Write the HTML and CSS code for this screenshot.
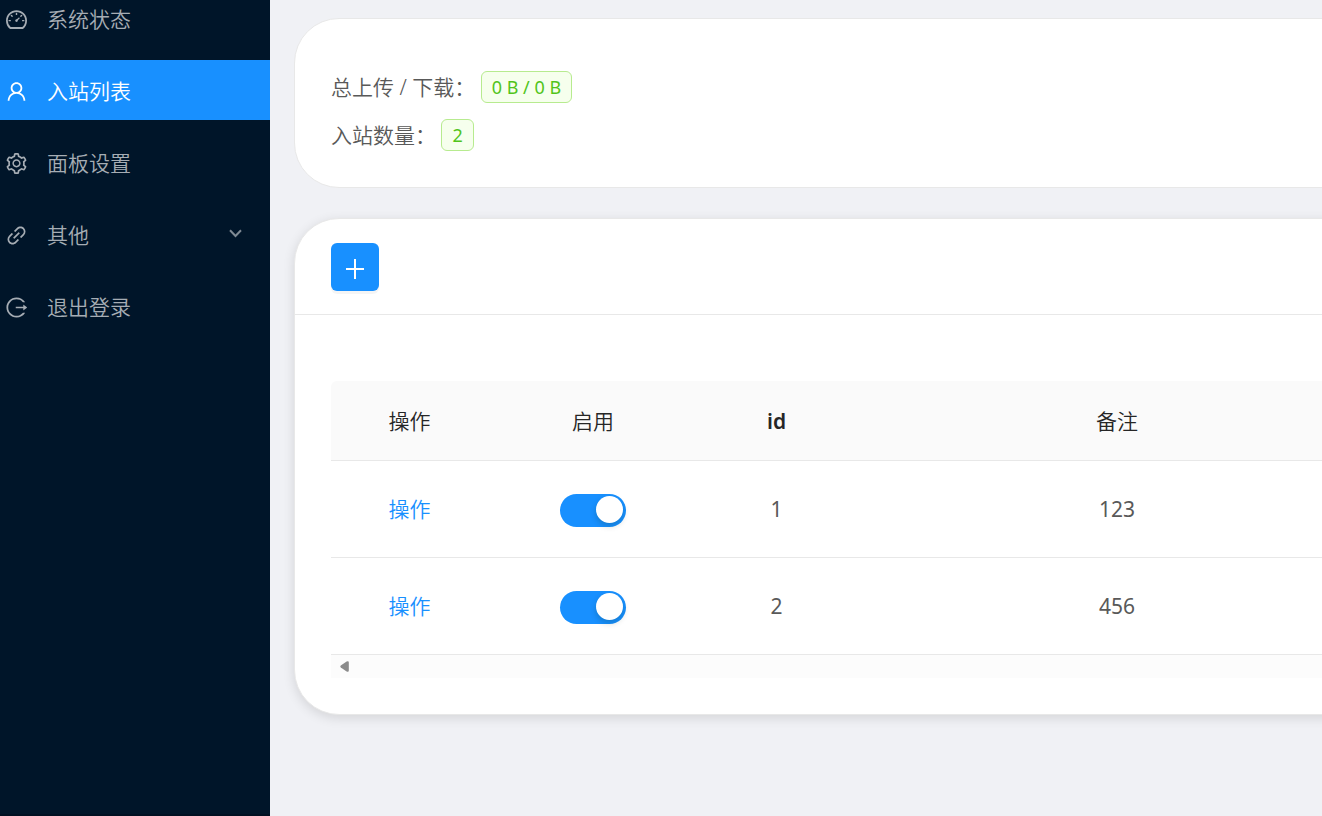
FILE: index.html
```html
<!DOCTYPE html>
<html lang="zh-CN">
<head>
<meta charset="utf-8">
<meta name="viewport" content="width=device-width, initial-scale=1">
<title>入站列表</title>
<link rel="stylesheet" href="styles.css">
</head>
<body>
<div class="layout">
  <nav class="sidebar" aria-label="主菜单">
    <ul class="menu">
      <li><a class="menu-item" href="#status">
        <svg class="icon" viewBox="64 64 896 896" aria-hidden="true"><path d="M924.8 385.6a446.7 446.7 0 0 0-96-142.4 446.7 446.7 0 0 0-142.4-96C631.1 123.8 572.5 112 512 112s-119.1 11.8-174.4 35.2a446.7 446.7 0 0 0-142.4 96 446.7 446.7 0 0 0-96 142.4C75.8 440.9 64 499.5 64 560c0 132.7 58.3 257.7 159.9 343.1l1.7 1.4c5.8 4.8 13.1 7.5 20.6 7.5h531.7c7.5 0 14.8-2.7 20.6-7.5l1.7-1.4C901.7 817.7 960 692.7 960 560c0-60.5-11.9-119.1-35.2-174.4zM761.4 836H262.6A371.12 371.12 0 0 1 140 560c0-99.4 38.7-192.8 109-263 70.3-70.3 163.7-109 263-109 99.4 0 192.8 38.7 263 109 70.3 70.3 109 163.7 109 263 0 105.6-44.5 205.5-122.6 276zM623.5 421.5a8.03 8.03 0 0 0-11.3 0L527.7 506c-18.7-5-39.4-.2-54.1 14.5a55.95 55.95 0 0 0 0 79.2 55.95 55.95 0 0 0 79.2 0 55.87 55.87 0 0 0 14.5-54.1l84.5-84.5c3.1-3.1 3.1-8.2 0-11.3l-28.3-28.3zM490 320h44c4.4 0 8-3.6 8-8v-80c0-4.4-3.6-8-8-8h-44c-4.4 0-8 3.6-8 8v80c0 4.4 3.6 8 8 8zm260 218v44c0 4.4 3.6 8 8 8h80c4.4 0 8-3.6 8-8v-44c0-4.4-3.6-8-8-8h-80c-4.4 0-8 3.6-8 8zm12.7-197.2l-31.1-31.1a8.03 8.03 0 0 0-11.3 0l-56.6 56.6a8.03 8.03 0 0 0 0 11.3l31.1 31.1c3.1 3.1 8.2 3.1 11.3 0l56.6-56.6c3.1-3.1 3.1-8.2 0-11.3zm-458.6-31.1a8.03 8.03 0 0 0-11.3 0l-31.1 31.1a8.03 8.03 0 0 0 0 11.3l56.6 56.6c3.1 3.1 8.2 3.1 11.3 0l31.1-31.1c3.1-3.1 3.1-8.2 0-11.3l-56.6-56.6zM262 530h-80c-4.4 0-8 3.6-8 8v44c0 4.4 3.6 8 8 8h80c4.4 0 8-3.6 8-8v-44c0-4.4-3.6-8-8-8z"/></svg>
        <span>系统状态</span></a></li>
      <li><a class="menu-item selected" href="#inbounds" aria-current="page">
        <svg class="icon" viewBox="64 64 896 896" aria-hidden="true"><path d="M858.5 763.6a374 374 0 0 0-80.6-119.5 375.63 375.63 0 0 0-119.5-80.6c-.4-.2-.8-.3-1.2-.5C719.5 518 760 444.7 760 362c0-137-111-248-248-248S264 225 264 362c0 82.7 40.5 156 102.8 201.1-.4.2-.8.3-1.2.5-44.8 18.9-85 46-119.5 80.6a375.63 375.63 0 0 0-80.6 119.5A371.7 371.7 0 0 0 136 901.8a8 8 0 0 0 8 8.2h60c4.4 0 7.9-3.5 8-7.8 2-77.2 33-149.5 87.8-204.3 56.7-56.7 132-87.9 212.2-87.9s155.5 31.2 212.2 87.9C779 752.7 810 825 812 902.2c.1 4.4 3.6 7.8 8 7.8h60a8 8 0 0 0 8-8.2c-1-47.8-10.9-94.3-29.5-138.2zM512 534c-45.9 0-89.1-17.9-121.6-50.4S340 407.9 340 362c0-45.9 17.9-89.1 50.4-121.6S466.1 190 512 190s89.1 17.9 121.6 50.4S684 316.1 684 362c0 45.9-17.9 89.1-50.4 121.6S557.9 534 512 534z"/></svg>
        <span>入站列表</span></a></li>
      <li><a class="menu-item" href="#settings">
        <svg class="icon" viewBox="64 64 896 896" aria-hidden="true"><path d="M924.8 625.7l-65.5-56c3.1-19 4.7-38.4 4.7-57.8s-1.6-38.8-4.7-57.8l65.5-56a32.03 32.03 0 0 0 9.3-35.2l-.9-2.6a443.74 443.74 0 0 0-79.7-137.9l-1.8-2.1a32.12 32.12 0 0 0-35.1-9.5l-81.3 28.9c-30-24.6-63.5-44-99.7-57.6l-15.7-85a32.05 32.05 0 0 0-25.8-25.7l-2.7-.5c-52.1-9.4-106.9-9.4-159 0l-2.7.5a32.05 32.05 0 0 0-25.8 25.7l-15.8 85.4a351.86 351.86 0 0 0-99 57.4l-81.9-29.1a32 32 0 0 0-35.1 9.5l-1.8 2.1a446.02 446.02 0 0 0-79.7 137.9l-.9 2.6c-4.5 12.5-.8 26.5 9.3 35.2l66.3 56.6c-3.1 18.8-4.6 38-4.6 57.1 0 19.2 1.5 38.4 4.6 57.1L99 625.5a32.03 32.03 0 0 0-9.3 35.2l.9 2.6c18.1 50.4 44.9 96.9 79.7 137.9l1.8 2.1a32.12 32.12 0 0 0 35.1 9.5l81.9-29.1c29.8 24.5 63.1 43.9 99 57.4l15.8 85.4a32.05 32.05 0 0 0 25.8 25.7l2.7.5a449.4 449.4 0 0 0 159 0l2.7-.5a32.05 32.05 0 0 0 25.8-25.7l15.7-85a350 350 0 0 0 99.7-57.6l81.3 28.9a32 32 0 0 0 35.1-9.5l1.8-2.1c34.8-41.1 61.6-87.5 79.7-137.9l.9-2.6c4.5-12.3.8-26.3-9.3-35zM788.3 465.9c2.5 15.1 3.8 30.6 3.8 46.1s-1.3 31-3.8 46.1l-6.6 40.1 74.7 63.9a370.03 370.03 0 0 1-42.6 73.6L721 702.8l-31.4 25.8c-23.9 19.6-50.5 35-79.3 45.8l-38.1 14.3-17.9 97a377.5 377.5 0 0 1-85 0l-17.9-97.2-37.8-14.5c-28.5-10.8-55-26.2-78.7-45.7l-31.4-25.9-93.4 33.2c-17-22.9-31.2-47.6-42.6-73.6l75.5-64.5-6.5-40c-2.4-14.9-3.7-30.3-3.7-45.5 0-15.3 1.2-30.6 3.7-45.5l6.5-40-75.5-64.5c11.3-26.1 25.6-50.7 42.6-73.6l93.4 33.2 31.4-25.9c23.7-19.5 50.2-34.9 78.7-45.7l37.9-14.3 17.9-97.2c28.1-3.2 56.8-3.2 85 0l17.9 97 38.1 14.3c28.7 10.8 55.4 26.2 79.3 45.8l31.4 25.8 92.8-32.9c17 22.9 31.2 47.6 42.6 73.6L781.8 426l6.5 39.9zM512 326c-97.2 0-176 78.8-176 176s78.8 176 176 176 176-78.8 176-176-78.8-176-176-176zm79.2 255.2A111.6 111.6 0 0 1 512 614c-29.9 0-58-11.7-79.2-32.8A111.6 111.6 0 0 1 400 502c0-29.9 11.7-58 32.8-79.2C454 401.6 482.1 390 512 390c29.9 0 58 11.6 79.2 32.8A111.6 111.6 0 0 1 624 502c0 29.9-11.7 58-32.8 79.2z"/></svg>
        <span>面板设置</span></a></li>
      <li><button class="menu-item" type="button" aria-expanded="false">
        <svg class="icon" viewBox="64 64 896 896" aria-hidden="true"><path d="M574 665.4a8.03 8.03 0 0 0-11.3 0L446.5 781.6c-53.8 53.8-144.6 59.5-204 0-59.5-59.5-53.8-150.2 0-204l116.2-116.2c3.1-3.1 3.1-8.2 0-11.3l-39.8-39.8a8.03 8.03 0 0 0-11.3 0L191.4 526.5c-84.6 84.6-84.6 221.5 0 306s221.5 84.6 306 0l116.2-116.2c3.1-3.1 3.1-8.2 0-11.3L574 665.4zm258.6-474c-84.6-84.6-221.5-84.6-306 0L410.3 307.6a8.03 8.03 0 0 0 0 11.3l39.7 39.7c3.1 3.1 8.2 3.1 11.3 0l116.2-116.2c53.8-53.8 144.6-59.5 204 0 59.5 59.5 53.8 150.2 0 204L665.3 562.6a8.03 8.03 0 0 0 0 11.3l39.8 39.8c3.1 3.1 8.2 3.1 11.3 0l116.2-116.2c84.5-84.6 84.5-221.5 0-306.1zM610.1 372.3a8.03 8.03 0 0 0-11.3 0L372.3 598.7a8.03 8.03 0 0 0 0 11.3l39.6 39.6c3.1 3.1 8.2 3.1 11.3 0l226.4-226.4c3.1-3.1 3.1-8.2 0-11.3l-39.5-39.6z"/></svg>
        <span>其他</span>
        <svg class="chevron" viewBox="0 0 13 9" aria-hidden="true"><path d="M1 1.2 6.5 7 12 1.2"/></svg></button></li>
      <li><a class="menu-item" href="#logout">
        <svg class="icon" viewBox="64 64 896 896" aria-hidden="true"><path d="M868 732h-70.3c-4.8 0-9.3 2.1-12.3 5.8-7 8.5-14.5 16.7-22.4 24.5a353.84 353.84 0 0 1-112.7 75.9A352.8 352.8 0 0 1 512.4 866c-47.9 0-94.3-9.4-137.9-27.8a353.84 353.84 0 0 1-112.7-75.9 353.28 353.28 0 0 1-76-112.5C167.3 606.2 158 559.9 158 512s9.4-94.2 27.8-137.8c17.8-42.1 43.4-80 76-112.5s70.5-58.1 112.7-75.9c43.6-18.4 90-27.8 137.9-27.8 47.9 0 94.3 9.3 137.9 27.8 42.2 17.8 80.1 43.4 112.7 75.9 7.9 7.9 15.3 16.1 22.4 24.5 3 3.7 7.6 5.8 12.3 5.8H868c6.3 0 10.2-7 6.7-12.3C798 160.5 663.8 81.6 511.3 82 271.7 82.6 79.6 277.1 82 516.4 84.4 751.9 276.2 942 512.4 942c152.1 0 285.7-78.8 362.3-197.7 3.4-5.3-.4-12.3-6.7-12.3zm88.9-226.3L815 393.7c-5.3-4.2-13-.4-13 6.3v76H488c-4.4 0-8 3.6-8 8v56c0 4.4 3.6 8 8 8h314v76c0 6.7 7.8 10.5 13 6.3l141.9-112a8 8 0 0 0 0-12.6z"/></svg>
        <span>退出登录</span></a></li>
    </ul>
  </nav>

  <main class="content">
    <section class="card summary">
      <p class="stat">总上传 / 下载： <span class="tag">0 B / 0 B</span></p>
      <p class="stat">入站数量： <span class="tag">2</span></p>
    </section>

    <section class="card raised">
      <header class="card-head">
        <button class="add" type="button" aria-label="添加入站">
          <svg viewBox="0 0 20 20" aria-hidden="true"><path d="M10 0v20M1 10h18"/></svg>
        </button>
      </header>
      <div class="card-body">
        <div class="table-wrap">
          <table class="table">
            <colgroup><col class="col-narrow"><col class="col-switch"><col class="col-narrow"><col class="col-remark"></colgroup>
            <thead>
              <tr><th scope="col">操作</th><th scope="col">启用</th><th scope="col" class="strong">id</th><th scope="col">备注</th></tr>
            </thead>
            <tbody>
              <tr>
                <td><a class="action" href="#inbound-1">操作</a></td>
                <td><input class="switch" type="checkbox" aria-label="启用 1" checked></td>
                <td class="value">1</td><td class="value">123</td>
              </tr>
              <tr>
                <td><a class="action" href="#inbound-2">操作</a></td>
                <td><input class="switch" type="checkbox" aria-label="启用 2" checked></td>
                <td class="value">2</td><td class="value">456</td>
              </tr>
            </tbody>
          </table>
          <div class="scroll-track">
            <svg class="scroll-arrow" viewBox="0 0 9 11" aria-hidden="true"><path d="M.8 4.6 6.6.5Q8.8-.4 8.8 1.4v8.2q0 1.8-2.2.9L.8 6.4Q-.2 5.5.8 4.6z"/></svg>
          </div>
        </div>
      </div>
    </section>
  </main>
</div>
</body>
</html>
```
FILE: styles.css
```css
* {
  box-sizing: border-box;
}

body {
  margin: 0;
  background: #f0f1f5;
  color: #595959;
  font-family: "Noto Sans", "Noto Sans CJK SC", sans-serif;
  font-size: 21px;
  font-weight: 350;
  line-height: 32px;
}

.layout {
  display: flex;
  min-height: 100vh;
  overflow: hidden;
}

/* Sidebar */
.sidebar {
  flex: 0 0 270px;
  background: #001529;
  border-bottom: 2px solid #001022;
}

.menu {
  display: grid;
  gap: 12px;
  margin: -12px 0 0;
  padding: 0;
  list-style: none;
}

.menu-item {
  display: flex;
  align-items: center;
  gap: 20px;
  width: 100%;
  height: 60px;
  padding: 3px 28px 0 6px;
  border: 0;
  background: none;
  color: #a6adb4;
  font: inherit;
  text-align: left;
  text-decoration: none;
}

.menu-item.selected {
  background: #1890ff;
  color: #fff;
}

.menu-item span {
  padding-bottom: 2px;
}

.icon {
  flex: none;
  width: 21px;
  height: 21px;
  fill: currentColor;
}

.chevron {
  width: 13px;
  height: 9px;
  margin-bottom: 4px;
  margin-left: auto;
  fill: none;
  stroke: #7f8a94;
  stroke-width: 2;
}

/* Cards run past the right edge of the window */
.content {
  flex: 1;
  min-width: 0;
  margin-right: -60px;
  padding: 18px 0 36px 24px;
}

.card {
  border: 1px solid #e8e8e8;
  border-radius: 45px;
  background: #fff;
}

.raised {
  margin-top: 30px;
  box-shadow: 0 3px 12px rgba(0, 0, 0, 0.12);
}

.summary {
  display: grid;
  gap: 16px;
  padding: 52px 36px 36px;
}

.stat {
  display: flex;
  align-items: center;
  margin: 0;
  white-space: pre;
}

.tag {
  padding: 0 10px;
  border: 1px solid #b7eb8f;
  border-radius: 6px;
  background: #f6ffed;
  color: #52c41a;
  font-size: 18px;
  font-weight: 400;
  line-height: 30px;
}

.card-head {
  display: flex;
  padding: 24px 36px 23px;
  border-bottom: 1px solid #e8e8e8;
}

.add {
  display: grid;
  place-items: center;
  width: 48px;
  height: 48px;
  padding: 3px 0 0;
  border: 0;
  border-radius: 6px;
  background: #1890ff;
  box-shadow: 0 3px 0 rgba(0, 0, 0, 0.04);
}

.add svg {
  width: 20px;
  height: 20px;
  stroke: #fff;
  stroke-width: 2;
}

.card-body {
  padding: 66px 0 36px 36px;
}

/* Table */
.table-wrap {
  overflow: hidden;
}

.table {
  width: 1048px;
  border-collapse: separate;
  border-spacing: 0;
  table-layout: fixed;
  text-align: center;
}

.col-narrow {
  width: 157px;
}

.col-switch {
  width: 210px;
}

.col-remark {
  width: 524px;
}

.table th,
.table td {
  padding: 0;
  border-bottom: 1px solid #e8e8e8;
}

.table th {
  height: 80px;
  background: #fafafa;
  color: #262626;
  font-weight: 350;
}

.table th:first-child {
  border-top-left-radius: 6px;
}

.table th.strong {
  font-weight: 600;
}

.table td {
  height: 97px;
}

.table .value {
  font-weight: 400;
}

.action {
  color: #1890ff;
  text-decoration: none;
}

.switch {
  display: flex;
  align-items: center;
  justify-content: flex-end;
  width: 66px;
  height: 33px;
  margin: 2px auto 0;
  padding: 0 3px 2px;
  border-radius: 17px;
  appearance: none;
  background: #1890ff;
}

.switch::before {
  width: 27px;
  height: 27px;
  border-radius: 50%;
  background: #fff;
  box-shadow: 0 3px 6px rgba(0, 35, 11, 0.2);
  content: "";
}

.switch:not(:checked) {
  justify-content: flex-start;
  background: #bfbfbf;
}

.scroll-track {
  display: flex;
  align-items: center;
  height: 23px;
  padding-left: 9px;
  background: #fcfcfc;
}

.scroll-arrow {
  width: 9px;
  height: 11px;
  fill: #8b8b8b;
}
```
